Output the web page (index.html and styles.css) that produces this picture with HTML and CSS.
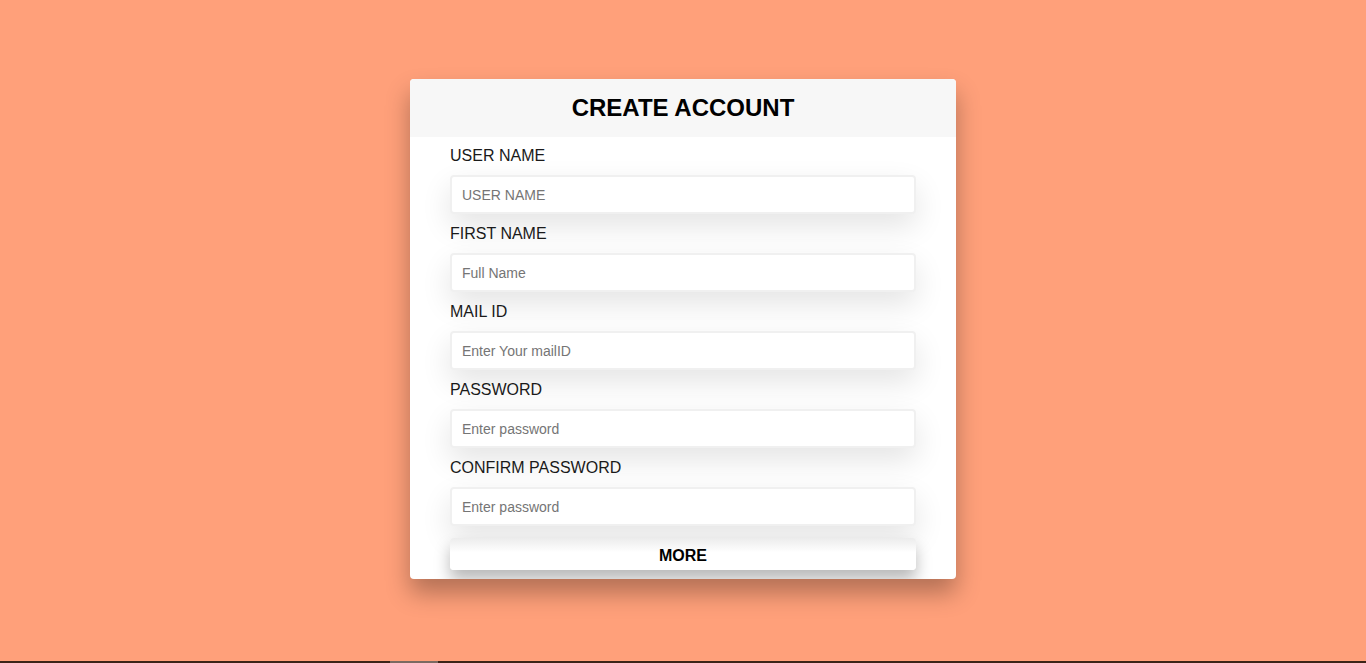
FILE: index.html
```html
<!DOCTYPE html>
<html>
<head>
<meta charset="utf-8">
<link rel="stylesheet" href="styles.css">
</head>
<body>
<div class="page">
  <div class="card">
    <div class="card-head"><h1 class="title">CREATE ACCOUNT</h1></div>
    <form class="form">
      <div class="group">
        <label class="label">USER NAME</label>
        <input class="input" type="text" placeholder="USER NAME">
      </div>
      <div class="group">
        <label class="label">FIRST NAME</label>
        <input class="input" type="text" placeholder="Full Name">
      </div>
      <div class="group">
        <label class="label">MAIL ID</label>
        <input class="input" type="text" placeholder="Enter Your mailID">
      </div>
      <div class="group">
        <label class="label">PASSWORD</label>
        <input class="input" type="password" placeholder="Enter password">
      </div>
      <div class="group">
        <label class="label">CONFIRM PASSWORD</label>
        <input class="input" type="password" placeholder="Enter password">
      </div>
      <button class="more" type="button">MORE</button>
    </form>
  </div>
</div>
<div class="scrollbar"><div class="thumb"></div></div>
</body>
</html>
```
FILE: styles.css
```css
html, body {
  margin: 0;
  padding: 0;
  height: 100%;
}
body {
  background: #ffa07a;
  font-family: "Liberation Sans", Arial, sans-serif;
  overflow: hidden;
}
.page {
  display: flex;
  justify-content: center;
  padding-top: 79px;
}
.card {
  width: 546px;
  height: 500px;
  background: #fff;
  border-radius: 4px;
  box-shadow: 0 14px 24px rgba(0, 0, 0, 0.3);
  overflow: hidden;
  display: flex;
  flex-direction: column;
}
.card-head {
  flex: none;
  height: 58px;
  background: #f7f7f7;
  display: flex;
  align-items: center;
  justify-content: center;
}
.title {
  margin: 0;
  font-size: 24px;
  font-weight: bold;
  color: #000;
  line-height: 28px;
}
.form {
  padding: 10px 40px 9px 40px;
  display: flex;
  flex-direction: column;
}
.group {
  display: flex;
  flex-direction: column;
  margin-bottom: 11px;
}
.group:last-of-type {
  margin-bottom: 12px;
}
.label {
  font-size: 16px;
  line-height: 18px;
  color: #1a1a1a;
  margin-bottom: 10px;
}
.input {
  box-sizing: border-box;
  height: 39px;
  width: 466px;
  border: 2px solid #f0f0f0;
  border-radius: 4px;
  padding: 0 10px;
  font-family: "Liberation Sans", Arial, sans-serif;
  font-size: 14px;
  color: #333;
  background: #fff;
  box-shadow: 0 12px 30px rgba(0, 0, 0, 0.11);
  outline: none;
}
.input::placeholder {
  color: #757575;
}
.more {
  flex: none;
  box-sizing: border-box;
  width: 466px;
  height: 32px;
  border: none;
  border-radius: 4px;
  background: linear-gradient(#ececec, #ffffff 45%);
  font-family: "Liberation Sans", Arial, sans-serif;
  font-size: 16px;
  font-weight: bold;
  color: #000;
  box-shadow: 0 10px 16px rgba(0, 0, 0, 0.28);
  padding: 0;
  padding-top: 3px;
}
.scrollbar {
  position: fixed;
  left: 0;
  right: 0;
  bottom: 0;
  height: 2px;
  background: #3b2418;
}
.thumb {
  position: absolute;
  left: 390px;
  width: 48px;
  top: 0;
  height: 2px;
  background: #7a6a62;
}
```
